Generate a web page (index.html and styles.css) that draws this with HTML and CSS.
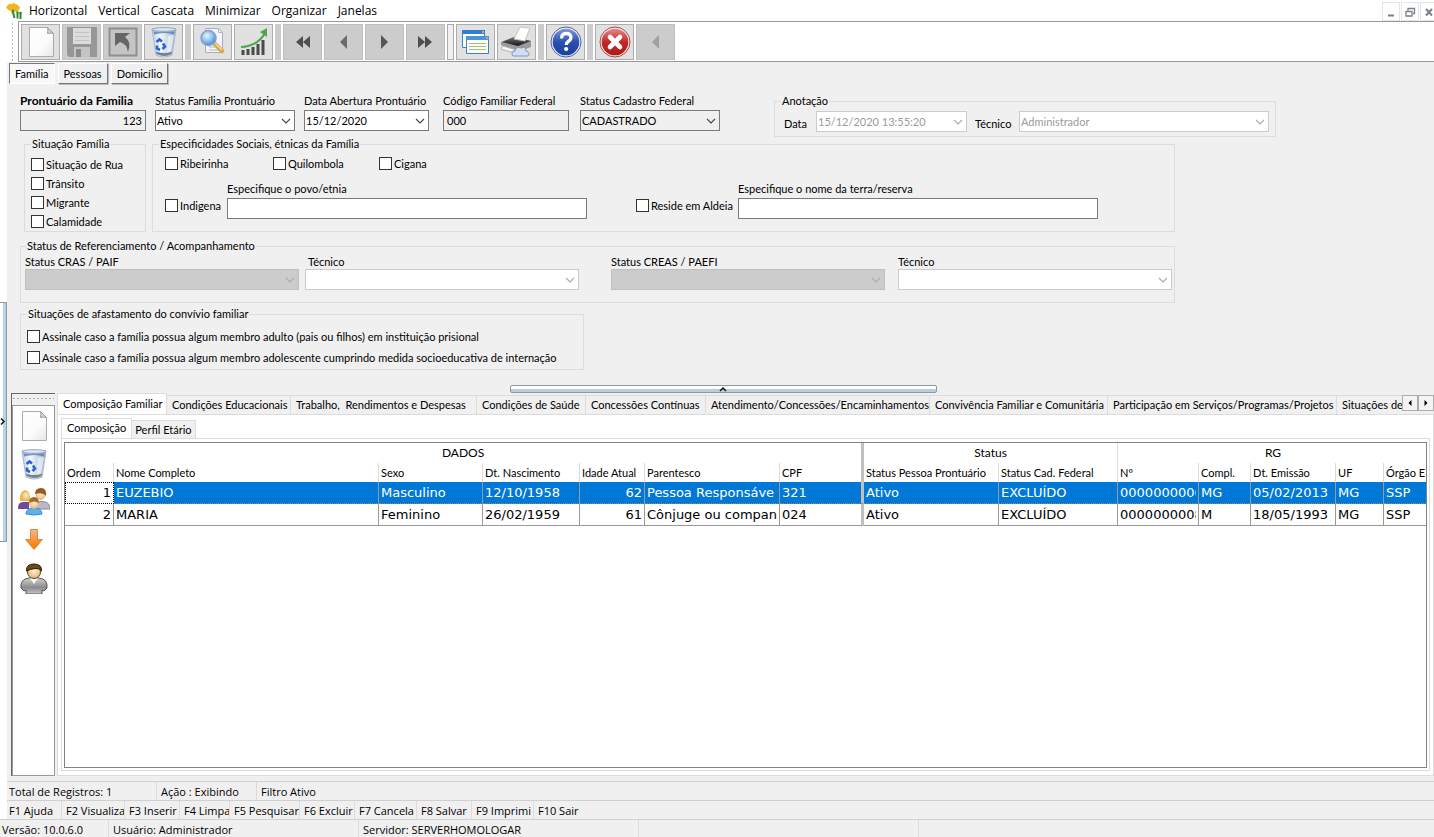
FILE: index.html
```html
<!DOCTYPE html>
<html lang="pt-BR">
<head>
<meta charset="utf-8">
<title>Prontuário da Família</title>
<link rel="stylesheet" href="styles.css">
</head>
<body>
<svg class="defs" aria-hidden="true">
  <defs>
    <linearGradient id="gPaper" x1="0" y1="0" x2="1" y2="1"><stop offset="0" stop-color="#fff"/><stop offset=".6" stop-color="#fbfbfb"/><stop offset="1" stop-color="#e6e6e6"/></linearGradient>
    <linearGradient id="gBin" x1="0" y1="0" x2="1" y2="0"><stop offset="0" stop-color="#b9cfe8"/><stop offset=".35" stop-color="#f2f8ff"/><stop offset="1" stop-color="#9fb2c9"/></linearGradient>
    <radialGradient id="gLens" cx=".4" cy=".35" r=".7"><stop offset="0" stop-color="#e9f6ff"/><stop offset=".6" stop-color="#7fb8ee"/><stop offset="1" stop-color="#3f7fd0"/></radialGradient>
    <linearGradient id="gBlue" x1="0" y1="0" x2="0" y2="1"><stop offset="0" stop-color="#7f98d8"/><stop offset=".5" stop-color="#2b4fae"/><stop offset="1" stop-color="#1d3fa0"/></linearGradient>
    <linearGradient id="gRed" x1="0" y1="0" x2="0" y2="1"><stop offset="0" stop-color="#e58a8a"/><stop offset=".5" stop-color="#c22828"/><stop offset="1" stop-color="#b01818"/></linearGradient>
    <linearGradient id="gOrange" x1="0" y1="0" x2="0" y2="1"><stop offset="0" stop-color="#f7b98a"/><stop offset=".6" stop-color="#f78f2a"/><stop offset="1" stop-color="#f07c00"/></linearGradient>
    <radialGradient id="gFace" cx=".5" cy=".4" r=".6"><stop offset="0" stop-color="#fff0d0"/><stop offset="1" stop-color="#e6b478"/></radialGradient>
    <linearGradient id="gCoat" x1="0" y1="0" x2="0" y2="1"><stop offset="0" stop-color="#d0d0d0"/><stop offset=".6" stop-color="#8a8a8a"/><stop offset="1" stop-color="#c8c8c8"/></linearGradient>
    <linearGradient id="gDark" x1="0" y1="0" x2="0" y2="1"><stop offset="0" stop-color="#777"/><stop offset="1" stop-color="#111"/></linearGradient>
    <symbol id="iPage" viewBox="0 0 32 32"><path d="M4.500 1.500h18l6 6v23h-24z" fill="url(#gPaper)" stroke="#aaa"/><path d="M22.500 1.500q1 3 0 6 3-1 6 0z" fill="#d8d8d8" stroke="#999"/></symbol>
    <symbol id="iBin" viewBox="0 0 32 32"><path d="M4 3h24l-4 26q-8 4-16 0z" fill="url(#gBin)" stroke="#a9b7c9"/><path d="M5.500 5.500h21l-.5 3q-10-3-20 0z" fill="#5f7db0" opacity=".8"/><path d="M20 10l6-1-3 17-4 1z" fill="#fff" opacity=".55"/><ellipse cx="16" cy="3.500" rx="12" ry="1.800" fill="#dfeaf6" stroke="#8fa3c0"/><path d="M8.500 16l3-2.500 2.500 2M15 17.500l2 3-2.500 2.500M12 24l-3-1.500v-3" fill="none" stroke="#2f62d0" stroke-width="2.600"/><path d="M8.500 28q7.500 4 15 0l.4-2.500q-7 3-15.800 0z" fill="#77808c"/></symbol>
    <symbol id="iCombo" viewBox="0 0 10 6"><path d="M1 1l4 4 4-4" fill="none" stroke="currentColor" stroke-width="1.100"/></symbol>
  </defs>
</svg>

<header class="menubar">
  <svg class="logo" viewBox="0 0 18 16"><path d="M0 4l3-3 3 0 1-1 3 1 4 3-1 3-2 2-3-1-2 4-1-4-3-1z" fill="#f3b51b"/><circle cx="7" cy="8" r="1.500" fill="#3f9a35"/><circle cx="11.500" cy="9.500" r="1.300" fill="#3f9a35"/><circle cx="14.500" cy="10" r="1.300" fill="#2c7a3d"/><path d="M7 9l1.500 6M11.500 10v5.500M14.500 11v5" stroke="#2c8a3d" stroke-width="2"/></svg>
  <nav class="menu">
    <a href="#">Horizontal</a><a href="#">Vertical</a><a href="#">Cascata</a><a href="#">Minimizar</a><a href="#">Organizar</a><a href="#">Janelas</a>
  </nav>
  <div class="winbtns">
    <button type="button" aria-label="Minimizar"><svg viewBox="0 0 12 12"><path d="M3 9.500h6" stroke="#777f88" stroke-width="2"/></svg></button>
    <button type="button" aria-label="Restaurar"><svg viewBox="0 0 12 12"><path d="M4 4.500v-2h6.500v5H9M2 5.500h6v4.500H2z" fill="none" stroke="#777f88" stroke-width="1.300"/></svg></button>
    <button type="button" aria-label="Fechar"><svg viewBox="0 0 12 12"><path d="M3 3l6 6.500M9 3l-6 6.500" stroke="#777f88" stroke-width="2"/></svg></button>
  </div>
</header>

<div class="toolrow">
  <div class="grip"></div>
  <div class="toolbar">
    <button type="button" aria-label="Novo"><svg><use href="#iPage"/></svg></button>
    <button type="button" class="off" aria-label="Salvar"><svg viewBox="0 0 32 32"><path d="M1 1h30v30H3l-2-2z" fill="#979797"/><path d="M7 2h18v16H7z" fill="#dcdcdc"/><path d="M9 6.500h14M9 10.500h14M9 14.500h14" stroke="#c3c3c3"/><path d="M8 21h16v10H8z" fill="#c4c4c4"/><path d="M10 23h5v8h-5z" fill="#8b8b8b"/></svg></button>
    <button type="button" class="off" aria-label="Desfazer"><svg viewBox="0 0 32 32"><path d="M2.500 2.500h27v27h-27z" fill="#c4c4c4" stroke="#8f8f8f" stroke-width="2"/><path d="M8 7h15l-5 4q7 5 3 15-1-8-8-10l-5 4z" fill="#666"/></svg></button>
    <button type="button" aria-label="Excluir"><svg><use href="#iBin"/></svg></button>
    <span class="gap"></span>
    <button type="button" aria-label="Pesquisar"><svg viewBox="0 0 32 32"><path d="M8.500 2.500h13l4 4v20h-17z" fill="#f4f4fb" stroke="#a9abc4"/><path d="M21.500 2.500v4h4M12 21h10M12 24h10" fill="none" stroke="#b4b4c8"/><path d="M17 17l8 8" stroke="#d9a441" stroke-width="4.500" stroke-linecap="round"/><path d="M18 17l7 7" stroke="#f6dc9a" stroke-width="1.500"/><circle cx="11.500" cy="12" r="7.500" fill="url(#gLens)" stroke="#8c9fc0" stroke-width="1.500"/></svg></button>
    <button type="button" aria-label="Estatísticas"><svg viewBox="0 0 32 32"><path d="M5 29v-5M10 29v-6M15 29v-8M20 29V18M25 29V14" stroke="#4b4b4b" stroke-width="3"/><path d="M3 21Q20 20 27 7" fill="none" stroke="#4ea84a" stroke-width="2.200"/><path d="M22 6l7-4 0 9z" fill="#4ea84a"/></svg></button>
    <span class="gap"></span>
    <button type="button" class="off" aria-label="Primeiro"><svg viewBox="0 0 32 32"><path d="M16 10v12l-7-6zM23 10v12l-7-6z" fill="#4e4e4e"/></svg></button>
    <button type="button" class="off" aria-label="Anterior"><svg viewBox="0 0 32 32"><path d="M19 9v14l-7-7z" fill="#6a6a6a"/></svg></button>
    <button type="button" class="off" aria-label="Próximo"><svg viewBox="0 0 32 32"><path d="M12 9v14l7-7z" fill="#555"/></svg></button>
    <button type="button" class="off" aria-label="Último"><svg viewBox="0 0 32 32"><path d="M15 10v12l7-6zM8 10v12l7-6z" fill="#4e4e4e"/></svg></button>
    <span class="handle"></span>
    <button type="button" aria-label="Janelas"><svg viewBox="0 0 32 32"><path d="M2.500 4.500h22v17h-22z" fill="#fff" stroke="#3a82c4"/><path d="M2 4h23v4H2z" fill="#2f7fd0"/><path d="M6.500 10.500h22v17h-22z" fill="#fdfbe8" stroke="#3a82c4"/><path d="M6 10h23v4H6z" fill="#4795de"/><path d="M9 17.500h17M9 20.500h17M9 23.500h17" stroke="#a9b8a0"/><path d="M22 6h2M26 12h2" stroke="#f0a060" stroke-width="2"/></svg></button>
    <button type="button" aria-label="Imprimir"><svg viewBox="0 0 32 32"><path d="M0 16l13-5 17 4v6l-13 5-17-7z" fill="#9a9a9a"/><path d="M1 16l12-5 17 4-13 5z" fill="url(#gDark)"/><path d="M13 13L19 1l10 1-5 13z" fill="#fdfdfd" stroke="#c4c4c4"/><path d="M2 20l13 4-5 2-10-3z" fill="#fafafa" stroke="#b4b4b4"/><path d="M12 30q-3-4 2-5 1-5 6-3 5-2 5 3 5 1 2 5z" fill="#d3ddf2" stroke="#8195bd"/></svg></button>
    <span class="gap"></span>
    <button type="button" aria-label="Ajuda"><svg viewBox="0 0 32 32"><circle cx="16" cy="16" r="15" fill="#eef1fa" stroke="#4b5f9c"/><circle cx="16" cy="16" r="13.300" fill="url(#gBlue)"/><path d="M11.500 12.500q0-5 4.700-5t4.700 4q0 2.500-2.700 4-2 1.200-2 3.500" fill="none" stroke="#fff" stroke-width="3.300"/><circle cx="16.200" cy="23" r="2.100" fill="#fff"/></svg></button>
    <span class="gap"></span>
    <button type="button" aria-label="Sair"><svg viewBox="0 0 32 32"><circle cx="16" cy="16" r="15" fill="#f7eaea" stroke="#a34b4b"/><circle cx="16" cy="16" r="13.300" fill="url(#gRed)"/><path d="M11 11l10 10M21 11L11 21" stroke="#fff" stroke-width="4.600" stroke-linecap="round"/></svg></button>
    <button type="button" class="off" aria-label="Recolher"><svg viewBox="0 0 32 32"><path d="M19 9v14l-7-7z" fill="#a0a0a0"/></svg></button>
  </div>
</div>

<div class="workspace">
  <div class="side-splitter"><button type="button" aria-label="Abrir painel"><svg viewBox="0 0 6 8"><path d="M1 1l3 3-3 3" fill="none" stroke="#111" stroke-width="1.500"/></svg></button></div>
  <main class="content">
    <nav class="modes">
      <button type="button" class="down">Família</button><button type="button">Pessoas</button><button type="button">Domicílio</button>
    </nav>

    <form class="form">
      <div class="row head">
        <div class="field"><label class="strong" for="pront">Prontuário da Familia</label><input id="pront" class="w126 num" value="123" readonly></div>
        <div class="field"><label for="stfam">Status Família Prontuário</label><span class="combo w140"><select id="stfam"><option>Ativo</option></select><svg><use href="#iCombo"/></svg></span></div>
        <div class="field"><label for="abert">Data Abertura Prontuário</label><span class="combo w125"><select id="abert"><option>15/12/2020</option></select><svg><use href="#iCombo"/></svg></span></div>
        <div class="field"><label for="cod">Código Familiar Federal</label><input id="cod" class="w126" value="000" readonly></div>
        <div class="field"><label for="stfed">Status Cadastro Federal</label><span class="combo w140 gray"><select id="stfed"><option>CADASTRADO</option></select><svg><use href="#iCombo"/></svg></span></div>
        <fieldset class="note">
          <legend>Anotação</legend>
          <div class="note-row">
            <label for="ndata">Data</label><span class="combo locked"><select id="ndata" disabled><option>15/12/2020 13:55:20</option></select><svg><use href="#iCombo"/></svg></span>
            <label for="ntec">Técnico</label><span class="combo locked"><select id="ntec" disabled><option>Administrador</option></select><svg><use href="#iCombo"/></svg></span>
          </div>
        </fieldset>
      </div>

      <div class="row social">
        <fieldset class="situ">
          <legend>Situação Família</legend>
          <div class="stack">
            <label class="check"><input type="checkbox">Situação de Rua</label>
            <label class="check"><input type="checkbox">Trânsito</label>
            <label class="check"><input type="checkbox">Migrante</label>
            <label class="check"><input type="checkbox">Calamidade</label>
          </div>
        </fieldset>
        <fieldset class="ethnic">
          <legend>Especificidades Sociais, étnicas da Família</legend>
          <div class="groups">
            <label class="check"><input type="checkbox">Ribeirinha</label>
            <label class="check"><input type="checkbox">Quilombola</label>
            <label class="check"><input type="checkbox">Cigana</label>
          </div>
          <div class="specify">
            <label class="check"><input type="checkbox">Indigena</label>
            <div class="field"><label for="povo">Especifique o povo/etnia</label><input id="povo" class="w360"></div>
            <label class="check"><input type="checkbox">Reside em Aldeia</label>
            <div class="field"><label for="terra">Especifique o nome da terra/reserva</label><input id="terra" class="w360"></div>
          </div>
        </fieldset>
      </div>

      <fieldset class="refer">
        <legend>Status de Referenciamento / Acompanhamento</legend>
        <div class="refer-row">
          <div class="field tight"><label for="cras">Status CRAS / PAIF</label><span class="combo locked filled"><select id="cras" disabled><option></option></select><svg><use href="#iCombo"/></svg></span></div>
          <div class="field tight"><label for="tec1" class="inset">Técnico</label><span class="combo locked"><select id="tec1" disabled><option></option></select><svg><use href="#iCombo"/></svg></span></div>
          <div class="field tight"><label for="creas">Status CREAS / PAEFI</label><span class="combo locked filled"><select id="creas" disabled><option></option></select><svg><use href="#iCombo"/></svg></span></div>
          <div class="field tight"><label for="tec2">Técnico</label><span class="combo locked"><select id="tec2" disabled><option></option></select><svg><use href="#iCombo"/></svg></span></div>
        </div>
      </fieldset>

      <fieldset class="away">
        <legend>Situações de afastamento do convívio familiar</legend>
        <div class="stack loose">
          <label class="check"><input type="checkbox">Assinale caso a família possua algum membro adulto (pais ou filhos) em instituição prisional</label>
          <label class="check"><input type="checkbox">Assinale caso a família possua algum membro adolescente cumprindo medida socioeducativa de internação</label>
        </div>
      </fieldset>
    </form>

    <div class="mid-splitter"><button type="button" aria-label="Recolher formulário"><svg viewBox="0 0 8 6"><path d="M1 5l3-3 3 3" fill="none" stroke="#111" stroke-width="1.500"/></svg></button></div>

    <section class="lower">
      <aside class="sidetools">
        <div class="dots"></div>
        <div class="sidebox">
          <button type="button" aria-label="Novo membro"><svg><use href="#iPage"/></svg></button>
          <button type="button" aria-label="Excluir membro"><svg><use href="#iBin"/></svg></button>
          <button type="button" aria-label="Família"><svg viewBox="0 0 32 32"><path d="M0 22q0-6 5-6h6v7H0z" fill="#6d4a9a"/><path d="M2 15q-1-9 5-11 6 1 5 11z" fill="#f2b92c"/><circle cx="8" cy="10" r="4" fill="url(#gFace)"/><path d="M19 23v-6q4-3 8-1 5 1 5 7z" fill="#b9b8cc" stroke="#8886a0"/><circle cx="22.500" cy="9" r="5" fill="url(#gFace)"/><path d="M17 8q0-6 6-6t5 8q-3-4-11-2z" fill="#9a5a20"/><path d="M8 28q0-6 8-6t8 6q-8 2-16 0z" fill="#5fb2e8" stroke="#3a8ccc"/><circle cx="16" cy="18" r="4.800" fill="url(#gFace)"/><path d="M11 17q0-6 5-6t5 6q-5-3-10 0z" fill="#a8692c"/></svg></button>
          <button type="button" aria-label="Mover para baixo"><svg viewBox="0 0 32 32"><path d="M12.500 5.500h7v10h5L16 25.500 7.500 15.500h5z" fill="url(#gOrange)" stroke="#d98a40"/></svg></button>
          <button type="button" aria-label="Pessoa"><svg viewBox="0 0 32 32"><path d="M3 26q-1-9 8-10h10q9 1 8 10l-3 3-2-1v4H8v-4l-2 1z" fill="url(#gCoat)" stroke="#555"/><path d="M12 16l4 6 4-6z" fill="#fff"/><circle cx="16" cy="10" r="6.500" fill="url(#gFace)" stroke="#5a4420"/><path d="M8.500 9Q8 2 16 2t7.500 7Q22 6 17 6.500q-5 .5-8.500 2.500z" fill="#6a4a18" stroke="#2a1c08"/></svg></button>
        </div>
      </aside>

      <div class="tabs">
        <div class="tabline">
          <div class="tablist" role="tablist">
            <button type="button" role="tab" class="on" aria-selected="true">Composição Familiar</button>
            <button type="button" role="tab">Condições Educacionais</button>
            <button type="button" role="tab">Trabalho,&nbsp; Rendimentos e Despesas</button>
            <button type="button" role="tab">Condições de Saúde</button>
            <button type="button" role="tab">Concessões Contínuas</button>
            <button type="button" role="tab">Atendimento/Concessões/Encaminhamentos</button>
            <button type="button" role="tab">Convivência Familiar e Comunitária</button>
            <button type="button" role="tab">Participação em Serviços/Programas/Projetos</button>
            <button type="button" role="tab">Situações de</button>
          </div>
          <div class="tabnav">
            <button type="button" aria-label="Abas anteriores"><svg viewBox="0 0 8 8"><path d="M5.500 1v6l-3-3z"/></svg></button>
            <button type="button" aria-label="Próximas abas"><svg viewBox="0 0 8 8"><path d="M2.500 1v6l3-3z"/></svg></button>
          </div>
        </div>
        <div class="panel">
          <div class="subtabs" role="tablist">
            <button type="button" role="tab" class="on" aria-selected="true">Composição</button>
            <button type="button" role="tab">Perfil Etário</button>
          </div>
          <div class="subpanel">
            <div class="gridbox">
              <table class="grid">
                <colgroup><col class="c49"><col class="c265"><col class="c104"><col class="c97"><col class="c65"><col class="c135"><col class="c84"><col class="c135"><col class="c119"><col class="c81"><col class="c52"><col class="c85"><col class="c48"><col></colgroup>
                <thead>
                  <tr class="bands"><th colspan="7" class="thick">DADOS</th><th colspan="2">Status</th><th colspan="5">RG</th></tr>
                  <tr><th>Ordem</th><th>Nome Completo</th><th>Sexo</th><th>Dt. Nascimento</th><th>Idade Atual</th><th>Parentesco</th><th class="thick">CPF</th><th>Status Pessoa Prontuário</th><th>Status Cad. Federal</th><th>Nº</th><th>Compl.</th><th>Dt. Emissão</th><th>UF</th><th>Órgão E</th></tr>
                </thead>
                <tbody>
                  <tr class="sel"><td class="num focus">1</td><td>EUZEBIO</td><td>Masculino</td><td>12/10/1958</td><td class="num">62</td><td>Pessoa Responsáve</td><td class="thick">321</td><td>Ativo</td><td>EXCLUÍDO</td><td><div class="clip">0000000006</div></td><td>MG</td><td>05/02/2013</td><td>MG</td><td>SSP</td></tr>
                  <tr><td class="num">2</td><td>MARIA</td><td>Feminino</td><td>26/02/1959</td><td class="num">61</td><td>Cônjuge ou compan</td><td class="thick">024</td><td>Ativo</td><td>EXCLUÍDO</td><td><div class="clip">0000000008</div></td><td>M</td><td>18/05/1993</td><td>MG</td><td>SSP</td></tr>
                </tbody>
              </table>
            </div>
          </div>
        </div>
      </div>
    </section>

    <div class="status info"><span>Total de Registros: 1</span><span>Ação : Exibindo</span><span>Filtro Ativo</span></div>
    <div class="status keys"><span>F1 Ajuda</span><span>F2 Visualiza</span><span>F3 Inserir</span><span>F4 Limpa</span><span>F5 Pesquisar</span><span>F6 Excluir</span><span>F7 Cancela</span><span>F8 Salvar</span><span>F9 Imprimi</span><span>F10 Sair</span></div>
  </main>
</div>
<footer class="status app"><span>Versão: 10.0.6.0</span><span>Usuário: Administrador</span><span>Servidor: SERVERHOMOLOGAR</span><span></span><span></span></footer>
</body>
</html>
```
FILE: styles.css
```css
:root {
  --ui: Lato, "Liberation Sans", sans-serif;
  --menu: "Open Sans", "Noto Sans", sans-serif;
  --data: "DejaVu Sans", Verdana, sans-serif;
  --face: #f0f0f0;
  --edge: #dcdcdc;
  --accent: #0078d7;
}
* { box-sizing: border-box; }
body {
  margin: 0;
  min-height: 100vh;
  display: flex;
  flex-direction: column;
  background: #fff;
  color: #000;
  font: 11px/14px var(--ui);
  overflow-x: hidden;
}
button, input, select { font: inherit; color: inherit; margin: 0; }
button { padding: 0; }
button svg { display: block; }
.defs { position: absolute; width: 0; height: 0; }

/* Menu */
.menubar { display: flex; align-items: center; height: 21px; padding-left: 6px; }
.logo { width: 18px; height: 16px; }
.menu { display: flex; gap: 11px; flex: 1; padding-left: 5px; font: 12px/20px var(--menu); }
.menu a { color: #000; text-decoration: none; }
.winbtns { display: flex; gap: 1px; align-self: flex-end; margin-right: -4px; }
.winbtns button { width: 18px; height: 19px; background: #fff; border: 1px solid #e3e5e7; }
.winbtns svg { width: 12px; height: 12px; margin: auto; }

/* Toolbar */
.toolrow { display: flex; height: 41px; }
.grip { width: 18px; background: linear-gradient(#fff 50%, transparent 50%) 0 0 / 100% 4px, linear-gradient(90deg, transparent 12px, #bbb 12px, #bbb 13px, transparent 13px); }
.toolbar {
  flex: 1;
  display: flex;
  gap: 2px;
  padding: 2px 0 1px 2px;
  border: solid #999;
  border-width: 1px 0 1px 1px;
}
.toolbar button { width: 39px; background: #e1e1e1; border: 1px solid #adadad; }
.toolbar button.off { background: #ccc; border-color: #bfbfbf; }
.toolbar svg { width: 32px; height: 32px; margin: auto; }
.gap { width: 6px; background: #ccc; }
.handle { width: 7px; background: var(--face); border: 1px solid #aaa; }

/* Work area */
.workspace { flex: 1; display: flex; }
.side-splitter { width: 7px; display: flex; align-items: center; padding-bottom: 38px; }
.side-splitter button {
  width: 7px;
  height: 240px;
  border: 1px solid #8d979e;
  border-left: 0;
  background: linear-gradient(90deg, #fff 50%, #b9d3e2 50%);
}
.side-splitter svg { width: 6px; height: 9px; }
.content { flex: 1; min-width: 0; display: flex; flex-direction: column; background: var(--face); }

.modes { display: flex; gap: 3px; padding: 1px 0 0 2px; }
.modes button {
  height: 21px;
  padding: 0 5px;
  background: var(--face);
  border: 1px solid;
  border-color: #fff #777 #777 #fff;
  box-shadow: 1px 1px 0 #bbb;
}
.modes .down { background: #f8f8f8; border-color: #777 #fff #fff #777; box-shadow: none; }

/* Form */
.form { padding: 10px 13px 0; }
.field { display: flex; flex-direction: column; align-items: flex-start; gap: 2px; }
.tight { gap: 0; }
.strong { font-weight: 700; font-size: 12px; }
.inset { padding-left: 3px; }
input:not([type]) { height: 21px; padding: 0 3px; border: 1px solid #7a7a7a; background: #fff; outline: 0; }
input[readonly] { background: var(--face) !important; }
.num { text-align: right; }
.w125 { width: 125px; }
.w126 { width: 126px; }
.w140 { width: 140px; }
.w360 { width: 360px; max-width: 100%; }
.combo { position: relative; display: block; height: 21px; color: #000; }
.combo select {
  appearance: none;
  width: 100%;
  height: 100%;
  padding: 0 20px 0 1px;
  border: 1px solid #7a7a7a;
  border-radius: 0;
  background: #fff;
  opacity: 1;
  outline: 0;
}
.combo svg { position: absolute; right: 4px; top: 8px; width: 10px; height: 6px; color: #444; pointer-events: none; }
.gray select { background: var(--face); }
.locked select { border-color: #ccc; color: #9b9b9b; }
.locked svg { color: #aaa; }
.filled select { background: #ccc; border-color: #bfbfbf; }

fieldset { margin: 0; padding: 0 6px; border: 1px solid var(--edge); min-width: 0; }
legend { padding: 0 1px; line-height: 14px; }
.row { display: grid; }
.head { grid-template-columns: 135px 149px 139px 137px 194px 502px; }
.note { padding: 0 6px 4px; }
.note-row { display: grid; grid-template-columns: 32px 151px 52px 250px; align-items: center; padding: 3px 0 0 3px; }
.note-row label { padding-top: 4px; }
.note-row label:nth-of-type(2) { padding-left: 8px; }
.social { grid-template-columns: 122px minmax(0, 1023px); gap: 6px; padding-left: 4px; }
.stack { display: flex; flex-direction: column; gap: 6px; padding-top: 7px; }
.loose { gap: 8px; padding: 9px 0 5px; }
.check { display: flex; align-items: center; gap: 2px; height: 13px; white-space: nowrap; }
.check input { appearance: none; flex: none; width: 13px; height: 13px; margin: 0; background: #fff; border: 1px solid #333; }
.check input:checked { background: #333; }
.groups { display: grid; grid-template-columns: 108px 106px 1fr; padding: 6px 0 0 6px; }
.specify { display: grid; grid-template-columns: 62px 409px 102px 360px; padding: 12px 0 12px 6px; }
.specify .check { align-self: end; margin-bottom: 7px; }
.refer { max-width: 1155px; margin-top: 7px; padding: 0 3px 12px; }
.refer legend { margin-left: 2px; }
.refer-row { display: grid; grid-template-columns: 280px 306px 287px 274px; padding: 2px 0 0 1px; }
.refer-row .combo { width: 274px; }
.away { max-width: 564px; margin-top: 4px; }

/* Horizontal splitter */
.mid-splitter { display: flex; justify-content: center; padding: 15px 0 0 6px; }
.mid-splitter button {
  width: 30%;
  height: 8px;
  border: 1px solid #8d979e;
  border-radius: 2px;
  background: linear-gradient(#fff 45%, #b9cfdc 45%);
}
.mid-splitter svg { width: 8px; height: 6px; margin: auto; }

/* Lower section */
.lower { flex: 1; display: flex; gap: 2px; padding: 0 0 5px 4px; }
.sidetools { width: 44px; display: flex; flex-direction: column; border: solid #666; border-width: 1px 0 0 1px; }
.dots { height: 11px; margin: 0 1px; background: linear-gradient(90deg, #aaa 50%, transparent 50%) 0 4px / 4px 1px repeat-x; }
.sidebox { flex: 1; display: flex; flex-direction: column; align-items: center; gap: 6px; padding-top: 4px; background: #fff; border: 1px solid #999; }
.sidebox button { width: 32px; height: 32px; border: 0; background: none; }
.sidebox svg { width: 32px; height: 32px; }

.tabs { flex: 1; min-width: 0; display: flex; flex-direction: column; }
.tabline { display: flex; height: 22px; margin-bottom: -1px; }
.tablist {
  flex: 1;
  min-width: 0;
  overflow: hidden;
  display: grid;
  grid-template-columns: 110px 124px 186px 109px 120px 224px 178px 229px 97px;
}
.tablist button, .subtabs button {
  margin-top: 2px;
  padding: 0 0 0 5px;
  text-align: left;
  white-space: nowrap;
  background: var(--face);
  border: solid var(--edge);
  border-width: 1px 1px 1px 0;
}
.tablist .on, .subtabs .on { margin-top: 0; background: #fff; border-width: 1px 1px 0 1px; padding-bottom: 2px; }
.tabnav { display: flex; padding-top: 2px; }
.tabnav button { width: 16px; height: 16px; background: #f4f4f4; border: 1px solid #adadad; }
.tabnav svg { width: 8px; height: 8px; margin: auto; }
.panel { flex: 1; display: flex; flex-direction: column; padding: 3px 3px 4px; background: #fff; border: 1px solid var(--edge); }
.subtabs { display: flex; height: 21px; margin-bottom: -1px; }
.subtabs button { padding: 0 3px; }
.subtabs .on { padding: 0 5px 2px; }
.subpanel { flex: 1; display: flex; padding: 3px 2px 2px; border: 1px solid var(--edge); }
.gridbox { flex: 1; min-width: 0; overflow: hidden; border: 1px solid #828282; }

/* Data grid */
.grid { table-layout: fixed; width: 100%; min-width: 1360px; border-collapse: separate; border-spacing: 0; }
.c48 { width: 48px; }
.c49 { width: 49px; }
.c52 { width: 52px; }
.c65 { width: 65px; }
.c81 { width: 81px; }
.c84 { width: 84px; }
.c85 { width: 85px; }
.c97 { width: 97px; }
.c104 { width: 104px; }
.c119 { width: 119px; }
.c135 { width: 135px; }
.c265 { width: 265px; }
.grid th, .grid td { padding: 0 2px; overflow: hidden; white-space: nowrap; }
.grid th { height: 19px; text-align: left; font-weight: 400; border-right: 1px solid var(--edge); }
.grid .bands th { height: 20px; text-align: center; font-size: 12px; }
.grid td { height: 22px; font: 13px/18px var(--data); border-right: 1px solid #999; border-bottom: 1px solid #999; }
.grid .thick { border-right: 3px solid #c0c0c0; }
.grid tr > :last-child { border-right: 0; padding-right: 0; }
.grid .sel td { background: var(--accent); color: #fff; border-bottom: 1px dotted #888; }
.grid .sel .focus { background: #fff; color: #000; border: 1px dotted #000; }
.clip { overflow: hidden; }

/* Status bars */
.status { display: grid; height: 19px; border-top: 1px solid #d0d0d0; background: var(--face); font: 11px/19px var(--menu); }
.status span { padding: 0 0 0 4px; overflow: hidden; white-space: nowrap; border-right: 1px solid var(--edge); }
.status span:first-child { padding-left: 2px; }
.status span:last-child { border-right: 0; }
.info { grid-template-columns: 150px 100px 1fr; }
.keys { grid-template-columns: 55px 63px 55px 50px 70px 55px 62px 55px 62px 1fr; }
.app { height: 18px; grid-template-columns: 109px 250px 280px 280px 1fr; }
```
